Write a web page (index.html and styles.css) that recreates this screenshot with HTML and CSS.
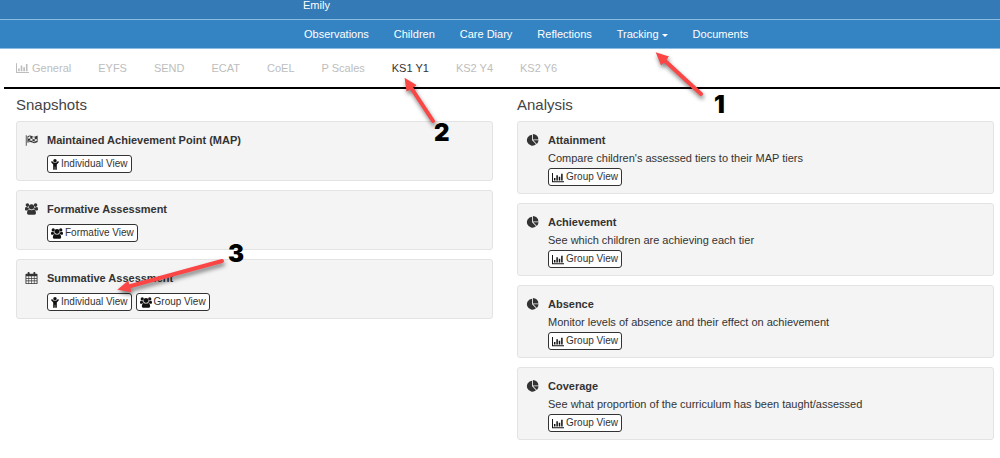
FILE: index.html
```
<!DOCTYPE html>
<html lang="en">

<head>
  <meta charset="UTF-8">
  <meta name="viewport" content="width=device-width, initial-scale=1.0">
  <title>Tracking - KS1 Y1</title>
  <link rel="stylesheet" href="styles.css">
</head>

<body>
  <!-- Icon set -->
  <svg class="sprite" aria-hidden="true">
    <symbol id="icon-chart" viewBox="0 0 16 14">
      <path d="M0 1h1.300v11h14.700v1.300H0zM2.600 7.500h2v3.500h-2zM5.800 4h2v7h-2zM9 6h2v5H9zM12.200 2h2v9h-2z" />
    </symbol>
    <symbol id="icon-flag" viewBox="0 0 16 14">
      <path d="M1 1h1v13H1z" />
      <path fill-rule="evenodd" d="M3 2.500C5 1.200 7 1.200 9 2.300S13 3 15.500 1.500V9.500C13 11 11 11.300 9 10.200S5 9.200 3 10.500zM4 3.200V5.700C5 5.100 5.800 5 6.500 5V2.400C5.600 2.400 4.800 2.700 4 3.200zM6.500 5V7.500C7.600 7.500 8.400 7.800 9.200 8.200V5.700C8.400 5.300 7.500 5 6.500 5zM9.200 3.300V5.700C10.200 6.100 11 6.200 12 6.100V3.700C11 3.800 10.200 3.700 9.200 3.300zM12 6.100V8.700C13 8.600 13.700 8.300 14.500 7.900V5.400C13.700 5.800 13 6.100 12 6.100zM4 8.200V9C4.800 8.600 5.600 8.400 6.500 8.400V7.500C5.600 7.500 4.800 7.800 4 8.200zM9.200 8.200V9.300C10.200 9.800 11 9.900 12 9.800V8.700C11 8.800 10.200 8.700 9.200 8.200z" />
    </symbol>
    <symbol id="icon-users" viewBox="0 0 16 14">
      <circle cx="3" cy="2.200" r="2.200" />
      <circle cx="13" cy="2.200" r="2.200" />
      <circle cx="8" cy="4.300" r="3.200" />
      <path d="M1.500 4.600C2.500 5.300 3.500 5.300 4.300 4.900C4.400 6 4.700 6.600 5.200 7.400C4 7.400 3.500 7.900 3 8.800H1.500C.5 8.800 0 8.200 0 7.300C0 6 .3 4.200 1.500 4.600zM14.500 4.600C13.500 5.300 12.500 5.300 11.700 4.900C11.600 6 11.300 6.600 10.800 7.400C12 7.400 12.500 7.900 13 8.800H14.500C15.500 8.800 16 8.200 16 7.300C16 6 15.700 4.200 14.500 4.600z" />
      <path d="M5 7.500C6.800 8.700 9.200 8.700 11 7.500C12.800 7.500 13.500 10 13.500 12C13.500 13.300 12.700 14 11.500 14H4.500C3.300 14 2.500 13.300 2.500 12C2.500 10 3.200 7.500 5 7.500z" />
    </symbol>
    <symbol id="icon-child" viewBox="0 0 10 14">
      <circle cx="5" cy="2.200" r="2.200" />
      <path d="M.4 3.200C.9 2.700 1.500 2.800 1.900 3.200L3.600 4.900H6.400L8.100 3.200C8.500 2.800 9.100 2.700 9.600 3.200C10 3.700 10 4.200 9.600 4.600L7.300 6.900V13C7.300 14.300 5.300 14.300 5.300 13V10H4.700V13C4.700 14.300 2.700 14.300 2.700 13V6.900L.4 4.600C0 4.200 0 3.700 .4 3.200z" />
    </symbol>
    <symbol id="icon-calendar" viewBox="0 0 14 14">
      <path fill-rule="evenodd" d="M1 2H2.500V1C2.500-.3 4.800-.3 4.800 1V2H9.200V1C9.200-.3 11.500-.3 11.500 1V2H13Q14 2 14 3V13Q14 14 13 14H1Q0 14 0 13V3Q0 2 1 2zM1 5V7H3.500V5zM4.200 5V7H6.700V5zM7.400 5V7H9.800V5zM10.500 5V7H13V5zM1 7.800V10H3.500V7.800zM4.200 7.800V10H6.700V7.800zM7.400 7.800V10H9.800V7.800zM10.500 7.800V10H13V7.800zM1 10.800V13H3.500V10.800zM4.200 10.800V13H6.700V10.800zM7.400 10.800V13H9.800V10.800zM10.500 10.800V13H13V10.800z" />
    </symbol>
    <symbol id="icon-pie" viewBox="0 0 14 14">
      <path d="M6.500 .8V7.400L11.100 12A6.400 6.400 0 1 1 6.500 .8zM7.500 0A6.400 6.400 0 0 1 13.900 6.400H7.500zM7.900 7.400H14A6.400 6.400 0 0 1 12.100 11.600z" />
    </symbol>
  </svg>

  <header>
    <div class="top-bar">
      <span>Emily</span>
    </div>
    <nav class="main-nav">
      <a href="#">Observations</a>
      <a href="#">Children</a>
      <a href="#">Care Diary</a>
      <a href="#">Reflections</a>
      <a href="#">Tracking <span class="caret"></span></a>
      <a href="#">Documents</a>
    </nav>
  </header>

  <nav class="tabs">
    <a href="#"><svg class="icon"><use href="#icon-chart" /></svg> General</a>
    <a href="#">EYFS</a>
    <a href="#">SEND</a>
    <a href="#">ECAT</a>
    <a href="#">CoEL</a>
    <a href="#">P Scales</a>
    <a href="#" class="active">KS1 Y1</a>
    <a href="#">KS2 Y4</a>
    <a href="#">KS2 Y6</a>
  </nav>

  <main class="columns">
    <section class="snapshots">
      <h2>Snapshots</h2>
      <div class="card">
        <svg class="icon"><use href="#icon-flag" /></svg>
        <div>
          <h3>Maintained Achievement Point (MAP)</h3>
          <div class="actions">
            <button type="button"><svg class="icon narrow"><use href="#icon-child" /></svg>Individual View</button>
          </div>
        </div>
      </div>
      <div class="card">
        <svg class="icon"><use href="#icon-users" /></svg>
        <div>
          <h3>Formative Assessment</h3>
          <div class="actions">
            <button type="button"><svg class="icon"><use href="#icon-users" /></svg>Formative View</button>
          </div>
        </div>
      </div>
      <div class="card">
        <svg class="icon"><use href="#icon-calendar" /></svg>
        <div>
          <h3>Summative Assessment</h3>
          <div class="actions">
            <button type="button"><svg class="icon narrow"><use href="#icon-child" /></svg>Individual View</button>
            <button type="button"><svg class="icon"><use href="#icon-users" /></svg>Group View</button>
          </div>
        </div>
      </div>
    </section>

    <section class="analysis">
      <h2>Analysis</h2>
      <div class="card">
        <svg class="icon"><use href="#icon-pie" /></svg>
        <div>
          <h3>Attainment</h3>
          <p>Compare children's assessed tiers to their MAP tiers</p>
          <button type="button"><svg class="icon"><use href="#icon-chart" /></svg>Group View</button>
        </div>
      </div>
      <div class="card">
        <svg class="icon"><use href="#icon-pie" /></svg>
        <div>
          <h3>Achievement</h3>
          <p>See which children are achieving each tier</p>
          <button type="button"><svg class="icon"><use href="#icon-chart" /></svg>Group View</button>
        </div>
      </div>
      <div class="card">
        <svg class="icon"><use href="#icon-pie" /></svg>
        <div>
          <h3>Absence</h3>
          <p>Monitor levels of absence and their effect on achievement</p>
          <button type="button"><svg class="icon"><use href="#icon-chart" /></svg>Group View</button>
        </div>
      </div>
      <div class="card">
        <svg class="icon"><use href="#icon-pie" /></svg>
        <div>
          <h3>Coverage</h3>
          <p>See what proportion of the curriculum has been taught/assessed</p>
          <button type="button"><svg class="icon"><use href="#icon-chart" /></svg>Group View</button>
        </div>
      </div>
    </section>
  </main>

  <!-- Numbered steps on top of the page -->
  <svg class="steps" width="1000" height="458" viewBox="0 0 1000 458">
    <defs>
      <marker id="head" markerUnits="userSpaceOnUse" markerWidth="13" markerHeight="12" refX="3" refY="6" orient="auto">
        <path d="M0 0L13 6L0 12z" fill="#fb4646" />
      </marker>
    </defs>
    <g class="arrows">
      <path d="M701 94L663 59" marker-end="url(#head)" />
      <path d="M433 121L410 86" marker-end="url(#head)" />
      <path d="M222 261L127 287" marker-end="url(#head)" />
    </g>
    <text x="714" y="113">1</text>
    <text x="434" y="141">2</text>
    <text x="228" y="262">3</text>
  </svg>
</body>

</html>
```
FILE: styles.css
```
* {
  box-sizing: border-box;
  margin: 0;
  padding: 0;
}

body {
  background: #fff;
  color: #333;
  font-family: "Liberation Sans", Arial, sans-serif;
  font-size: 11px;
  line-height: 16px;
}

a {
  color: inherit;
  text-decoration: none;
}

.sprite {
  position: absolute;
  width: 0;
  height: 0;
}

.icon {
  width: 13px;
  height: 12px;
  fill: currentColor;
  flex-shrink: 0;
}

.top-bar {
  height: 19px;
  padding-left: 303px;
  background: #337ab7;
  color: #fff;
  line-height: 10px;
}

.main-nav {
  display: flex;
  gap: 25px;
  height: 30px;
  padding-left: 304px;
  background: #3484c4;
  border-top: 1px solid #8bbce4;
  border-bottom: 1px solid #8bbce4;
  color: #fff;
  line-height: 28px;
}

.caret {
  display: inline-block;
  border-top: 3px solid;
  border-left: 3px solid transparent;
  border-right: 3px solid transparent;
  vertical-align: middle;
}

.tabs {
  display: flex;
  gap: 27px;
  height: 40px;
  margin-left: 4px;
  padding-left: 12px;
  border-bottom: 2px solid #000;
  color: #bdbdbd;
  line-height: 38px;
}

.tabs .icon {
  vertical-align: -2px;
}

.tabs .active {
  color: #333;
}

.columns {
  display: grid;
  grid-template-columns: 1fr 1fr;
  gap: 24px;
  padding: 6px 6px 16px 16px;
}

h2 {
  margin-bottom: 6px;
  color: #444;
  font-size: 15px;
  font-weight: normal;
  line-height: 20px;
}

.card {
  display: flex;
  gap: 9px;
  min-height: 60px;
  margin-bottom: 9px;
  padding: 10px 8px 7px;
  background: #f4f4f4;
  border: 1px solid #e3e3e3;
  border-radius: 3px;
}

.card > .icon {
  margin-top: 2px;
}

h3 {
  font-size: 11px;
  line-height: 16px;
}

.card p {
  line-height: 20px;
}

.actions {
  display: flex;
  gap: 4px;
  padding-top: 7px;
}

button {
  display: flex;
  align-items: center;
  gap: 2px;
  height: 18px;
  padding: 0 3px;
  background: #fff;
  border: 1px solid #333;
  border-radius: 3px;
  color: #333;
  font-family: inherit;
  font-size: 10px;
  line-height: 16px;
}

button .icon {
  width: 12px;
  height: 11px;
  color: #111;
}

button .narrow {
  width: 8px;
}

.steps {
  position: absolute;
  top: 0;
  left: 0;
  pointer-events: none;
}

.arrows {
  fill: none;
  stroke: #fb4646;
  stroke-width: 4;
  stroke-linecap: round;
  filter: drop-shadow(1px 3px 2px rgba(0, 0, 0, 0.5));
}

.arrows marker path {
  stroke: none;
}

.steps text {
  fill: #000;
  font-family: Inter, sans-serif;
  font-size: 24px;
  font-weight: 900;
}
```
